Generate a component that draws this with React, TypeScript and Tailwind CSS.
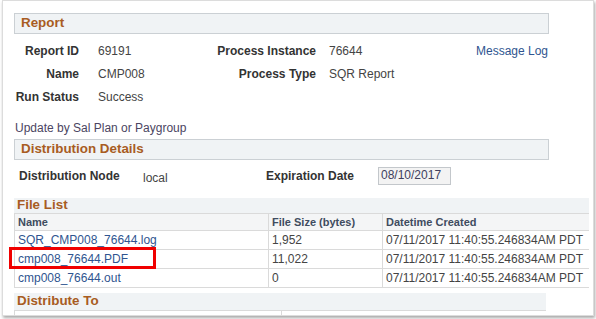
import React from "react";

const files = [
  { name: "SQR_CMP008_76644.log", size: "1,952", created: "07/11/2017 11:40:55.246834AM PDT" },
  { name: "cmp008_76644.PDF", size: "11,022", created: "07/11/2017 11:40:55.246834AM PDT" },
  { name: "cmp008_76644.out", size: "0", created: "07/11/2017 11:40:55.246834AM PDT" },
];

function SectionHeader({ title, className }: { title: string; className: string }) {
  return (
    <div className={`flex items-center bg-[#f0f3f5] text-[13.4px] font-bold text-[#a85c22] ${className}`}>
      {title}
    </div>
  );
}

export default function App() {
  return (
    <div className="w-[596px] h-[319px] bg-white font-['Liberation_Sans',Arial,sans-serif] text-[12px]">
      <div className="ml-[2px] w-[592px] h-[316px] border border-[#dcdcdc] shadow-[1px_2px_3px_rgba(0,0,0,0.35)] overflow-hidden">
        {/* Report */}
        <SectionHeader
          title="Report"
          className="mt-[12px] ml-[11px] w-[535px] h-[21px] border border-[#cbd0d4] pl-[6px]"
        />

        <div className="mt-[5px]">
          <div className="flex items-center h-[23px]">
            <div className="ml-[10px] w-[66px] text-right font-bold text-[#333]">Report ID</div>
            <div className="ml-[19px] w-[118px] text-[#444]">69191</div>
            <div className="w-[100px] text-right font-bold text-[#333] whitespace-nowrap">Process Instance</div>
            <div className="ml-[13px] w-[147px] text-[#444]">76644</div>
            <a className="text-[#2f5590] whitespace-nowrap">Message Log</a>
          </div>
          <div className="flex items-center h-[23px]">
            <div className="ml-[10px] w-[66px] text-right font-bold text-[#333]">Name</div>
            <div className="ml-[19px] w-[118px] text-[#444]">CMP008</div>
            <div className="w-[100px] text-right font-bold text-[#333] whitespace-nowrap">Process Type</div>
            <div className="ml-[13px] text-[#444]">SQR Report</div>
          </div>
          <div className="flex items-center h-[23px]">
            <div className="ml-[10px] w-[66px] text-right font-bold text-[#333] whitespace-nowrap">Run Status</div>
            <div className="ml-[19px] text-[#444]">Success</div>
          </div>
        </div>

        <div className="mt-[13px] ml-[12px] h-[15px] leading-[15px] text-[#4b4562]">
          Update by Sal Plan or Paygroup
        </div>

        {/* Distribution Details */}
        <SectionHeader
          title="Distribution Details"
          className="mt-[3px] ml-[11px] w-[535px] h-[21px] border border-[#cbd0d4] pl-[6px]"
        />

        <div className="flex items-center h-[30px] mt-[1px]">
          <div className="ml-[16px] w-[124px] font-bold text-[#333]">Distribution Node</div>
          <div className="w-[123px] pt-[4px] text-[#444]">local</div>
          <div className="w-[112px] font-bold text-[#333] whitespace-nowrap">Expiration Date</div>
          <div className="w-[73px] h-[18px] border border-[#c3c7cb] bg-[#f3f3f3] pl-[2px] leading-[15px] text-[#40405e]">
            08/10/2017
          </div>
        </div>

        {/* File List */}
        <SectionHeader title="File List" className="mt-[7px] ml-[11px] w-[575px] h-[15px] pl-[3px]" />

        <div className="relative ml-[11px] w-[575px]">
          <div className="grid grid-cols-[254px_114px_207px] h-[18px] bg-[#f4f5f6] border-y border-[#dadada] text-[11px] font-bold text-[#3f4c60]">
            <div className="pl-[3px] leading-[16px] border-l border-[#dadada]">Name</div>
            <div className="pl-[3px] leading-[16px] border-l border-[#dadada]">File Size (bytes)</div>
            <div className="pl-[3px] leading-[16px] border-l border-[#dadada]">Datetime Created</div>
          </div>
          {files.map((f) => (
            <div key={f.name} className="grid grid-cols-[254px_114px_207px] h-[19px] border-b border-[#dadada]">
              <div className="pl-[3px] leading-[18px] border-l border-[#dadada] text-[#2f5590]">{f.name}</div>
              <div className="pl-[3px] leading-[18px] border-l border-[#dadada] text-[#444]">{f.size}</div>
              <div className="pl-[3px] leading-[18px] border-l border-[#dadada] text-[#444] whitespace-nowrap">
                {f.created}
              </div>
            </div>
          ))}
          {/* highlight around PDF file */}
          <div className="absolute left-[-5px] top-[34px] w-[147px] h-[22px] border-[3px] border-[#f00000]" />
        </div>

        {/* Distribute To */}
        <SectionHeader title="Distribute To" className="mt-[5px] ml-[11px] w-[532px] h-[17px] pl-[3px]" />
        <div className="ml-[11px] w-[532px] h-[6px] border-t border-l border-[#dadada] flex">
          <div className="w-[266px]" />
          <div className="border-l border-[#dadada]" />
        </div>
      </div>
    </div>
  );
}
